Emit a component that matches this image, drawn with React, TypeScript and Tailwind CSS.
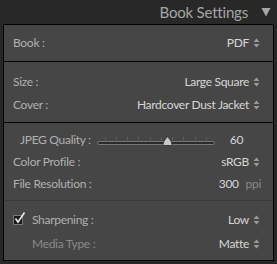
const Stepper = () => (
  <svg className="ml-[4px] shrink-0" width="7" height="10" viewBox="0 0 7 10" fill="#9a9a9a">
    <path d="M3.5 0.5 L6.5 4 L0.5 4 Z" />
    <path d="M3.5 9.5 L6.5 6 L0.5 6 Z" />
  </svg>
);

type RowProps = {
  label: string;
  value: string;
  h?: string;
  dim?: boolean;
  indent?: string;
};

const Row = ({ label, value, h = "h-[23px]", dim, indent = "pl-[9px]" }: RowProps) => (
  <div className={"flex items-center justify-between pr-[13px] " + h + " " + indent}>
    <span className={dim ? "text-[#8a8a8a]" : "text-[#b0b0b0]"}>{label}</span>
    <span className="flex items-center text-[#d6d6d6]">
      {value}
      <Stepper />
    </span>
  </div>
);

const Slider = () => (
  <div className="relative w-[118px] h-[14px] ml-[6px] shrink-0">
    <div className="absolute left-0 right-0 top-[4px] flex justify-between px-[8px]">
      {[0, 1, 2, 3, 4, 5, 6, 7, 8, 9].map((i) => (
        <span key={i} className="w-px h-[3px] bg-[#5e5e5e]" />
      ))}
    </div>
    <div className="absolute left-0 right-0 top-[8px] h-[4px] rounded-full bg-[#2a2a2a] border border-[#777]" />
    <svg className="absolute left-[65px] top-[3px]" width="11" height="10" viewBox="0 0 11 10">
      <path d="M5.5 0.5 L9 5 L10 8.5 Q10 9.5 9 9.5 L2 9.5 Q1 9.5 1 8.5 L2 5 Z" fill="#c8c8c8" stroke="#2a2a2a" strokeWidth="0.8" />
    </svg>
  </div>
);

export default function App() {
  return (
    <div
      className="w-[277px] h-[264px] bg-[#282828] text-[12px] tracking-[-0.3px] overflow-hidden"
      style={{ fontFamily: "Lato, 'Open Sans', sans-serif" }}
    >
      <div className="h-[24px] flex items-center justify-end pr-[6px]">
        <span className="text-[15px] text-[#a6a6a6] tracking-[-0.2px]">Book Settings</span>
        <svg className="ml-[13px]" width="10" height="10" viewBox="0 0 10 10">
          <path d="M0.5 1 L9.5 1 L5 9.5 Z" fill="#a6a6a6" />
        </svg>
      </div>
      <div className="mx-[3px] border border-black bg-[#464646]">
        <div className="h-[36px] flex flex-col justify-center">
          <Row label="Book :" value="PDF" h="h-[23px]" />
        </div>
        <div className="border-t border-black pt-[8px] pb-[6px]">
          <Row label="Size :" value="Large Square" />
          <Row label="Cover :" value="Hardcover Dust Jacket" />
        </div>
        <div className="border-t border-black pt-[6px] pb-[5px]">
          <div className="flex items-center h-[22px] pl-[16px] pr-[11px]">
            <span className="text-[#b0b0b0]">JPEG Quality :</span>
            <Slider />
            <span className="text-[#d6d6d6] ml-[15px]">60</span>
          </div>
          <div className="flex items-center justify-between h-[22px] pl-[9px] pr-[13px]">
            <span className="text-[#b0b0b0]">Color Profile :</span>
            <span className="flex items-center text-[#d6d6d6]">
              sRGB
              <Stepper />
            </span>
          </div>
          <div className="flex items-center justify-between h-[22px] pl-[9px] pr-[12px]">
            <span className="text-[#b0b0b0]">File Resolution :</span>
            <span className="text-[#d6d6d6]">
              300 <span className="ml-[4px] text-[#8a8a8a]">ppi</span>
            </span>
          </div>
        </div>
        <div className="border-t border-[#3a3a3a] pt-[7px] pb-[4px]">
          <div className="flex items-center justify-between h-[24px] pl-[9px] pr-[13px]">
            <span className="flex items-center text-[#b0b0b0]">
              <span className="relative w-[10px] h-[10px] bg-[#1a1a1a] border border-[#777] mr-[9px]">
                <svg className="absolute -top-[4px] left-0" width="12" height="12" viewBox="0 0 12 12">
                  <path d="M1.5 6.5 L4 10 L10.5 0.5" fill="none" stroke="#e8e8e8" strokeWidth="1.6" />
                </svg>
              </span>
              Sharpening :
            </span>
            <span className="flex items-center text-[#d6d6d6]">
              Low
              <Stepper />
            </span>
          </div>
          <Row label="Media Type :" value="Matte" h="h-[24px]" dim indent="pl-[28px]" />
        </div>
      </div>
    </div>
  );
}
